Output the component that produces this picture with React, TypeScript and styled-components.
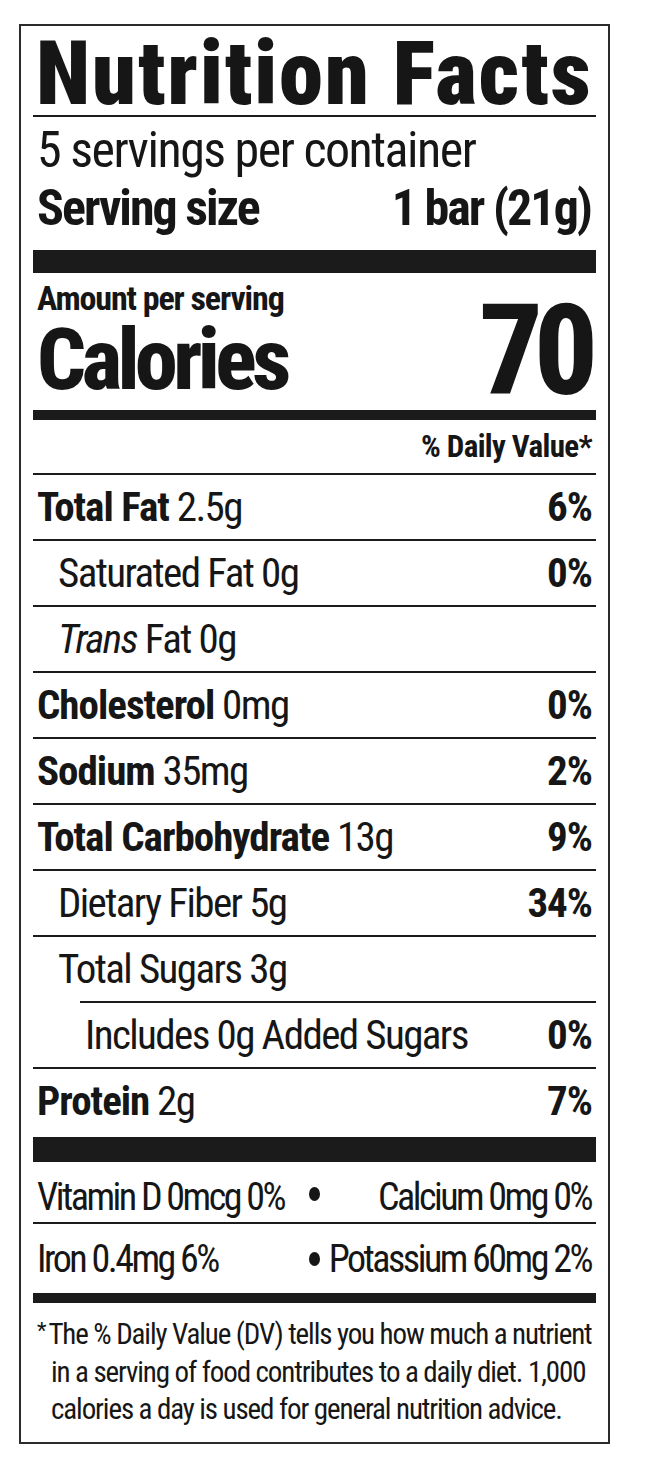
import React from "react";
import styled, { createGlobalStyle } from "styled-components";

const GlobalStyle = createGlobalStyle`
  body {
    margin: 0;
    background: #ffffff;
    font-family: Roboto, "Liberation Sans", Arial, sans-serif;
    font-stretch: 75%;
    color: #161616;
  }
`;

type Nutrient = {
  name: string;
  amount: string;
  dv?: string;
  bold?: boolean;
  italic?: boolean;
  indent?: number;
  ruleIndent?: number;
};

const nutrients: Nutrient[] = [
  { name: "Total Fat", amount: "2.5g", dv: "6%", bold: true },
  { name: "Saturated Fat", amount: "0g", dv: "0%", indent: 1 },
  { name: "Trans", amount: "Fat 0g", italic: true, indent: 1 },
  { name: "Cholesterol", amount: "0mg", dv: "0%", bold: true },
  { name: "Sodium", amount: "35mg", dv: "2%", bold: true },
  { name: "Total Carbohydrate", amount: "13g", dv: "9%", bold: true },
  { name: "Dietary Fiber", amount: "5g", dv: "34%", indent: 1 },
  { name: "Total Sugars", amount: "3g", indent: 1 },
  { name: "Includes 0g Added Sugars", amount: "", dv: "0%", indent: 2, ruleIndent: 47 },
  { name: "Protein", amount: "2g", dv: "7%", bold: true },
];

const vitamins = [
  ["Vitamin D 0mcg 0%", "Calcium 0mg 0%"],
  ["Iron 0.4mg 6%", "Potassium 60mg 2%"],
];

const Label = styled.div`
  box-sizing: border-box;
  width: 591px;
  margin: 24px 0 0 19px;
  padding: 0 12px 13px;
  border: 2px solid #2b2b2b;
`;

const Title = styled.h1`
  margin: 0;
  padding: 6px 0 0 3px;
  font-size: 89px;
  line-height: 83px;
  font-weight: 900;
  letter-spacing: 1.7px;
  white-space: nowrap;
`;

const Bar = styled.div<{ $h: number; $mt?: number }>`
  height: ${(p) => p.$h}px;
  margin-top: ${(p) => p.$mt ?? 0}px;
  background: #1b1b1b;
`;

const Servings = styled.div`
  padding: 8px 0 0 4px;
  font-size: 50px;
  line-height: 50px;
  letter-spacing: -1.5px;
`;

const ServingSize = styled.div`
  display: flex;
  justify-content: space-between;
  padding: 7px 5px 0 4px;
  margin-bottom: 16px;
  font-size: 50px;
  line-height: 52px;
  font-weight: 700;
  letter-spacing: -2px;
`;

const CaloriesBlock = styled.div`
  display: flex;
  justify-content: space-between;
  align-items: flex-end;
  padding: 8px 7px 5px 4px;
`;

const AmountPer = styled.div`
  font-size: 34px;
  line-height: 34px;
  font-weight: 700;
  letter-spacing: -1.1px;
`;

const CaloriesWord = styled.div`
  font-size: 86px;
  line-height: 90px;
  font-weight: 800;
  letter-spacing: -4.5px;
`;

const CaloriesValue = styled.div`
  font-size: 126px;
  line-height: 108px;
  font-weight: 800;
  letter-spacing: -9px;
`;

const DVHeader = styled.div`
  text-align: right;
  padding-right: 4px;
  font-size: 31px;
  line-height: 53px;
  font-weight: 700;
  letter-spacing: -0.6px;
`;

const Row = styled.div<{ $pad: number; $ruleIndent: number }>`
  display: flex;
  justify-content: space-between;
  height: 64px;
  margin-left: ${(p) => p.$ruleIndent}px;
  padding: 0 4px 0 ${(p) => p.$pad}px;
  border-top: 2px solid #1b1b1b;
  font-size: 41px;
  line-height: 64px;
  letter-spacing: -1.6px;
  white-space: nowrap;
`;

const Strong = styled.span`
  font-weight: 700;
  letter-spacing: -1px;
`;

const Italic = styled.span`
  font-style: italic;
`;

const Vitamins = styled.div`
  display: grid;
  grid-template-columns: minmax(0, 1fr) auto minmax(0, 1fr);
  font-size: 38px;
  letter-spacing: -2.5px;
  white-space: nowrap;
`;

const VitaminCell = styled.div<{ $right?: boolean; $first: boolean }>`
  display: flex;
  justify-content: ${(p) => (p.$right ? "flex-end" : "flex-start")};
  height: ${(p) => (p.$first ? 62 : 69)}px;
  box-sizing: border-box;
  padding: ${(p) => (p.$first ? "8px 5px 0 4px" : "2px 5px 0 4px")};
  line-height: ${(p) => (p.$first ? 54 : 67)}px;
  border-bottom: ${(p) => (p.$first ? "2px solid #1b1b1b" : "none")};
`;

const Bullet = styled.div<{ $first: boolean }>`
  display: flex;
  align-items: center;
  justify-content: center;
  width: 20px;
  height: ${(p) => (p.$first ? 62 : 69)}px;
  box-sizing: border-box;
  border-bottom: ${(p) => (p.$first ? "2px solid #1b1b1b" : "none")};

  &::before {
    content: "";
    width: 11px;
    height: 14px;
    border-radius: 50%;
    background: #161616;
    margin-top: ${(p) => (p.$first ? 4 : 0)}px;
  }
`;

const Footnote = styled.p`
  margin: 0;
  padding: 9px 0 0 18px;
  text-indent: -14px;
  font-size: 29px;
  line-height: 37.5px;
  letter-spacing: -1.1px;
  white-space: nowrap;
`;

const Star = styled.span`
  font-size: 22px;
  vertical-align: 6px;
  margin-right: 3px;
`;

const rowPad = (n: Nutrient) => {
  if (n.indent === 2) return 5;
  return n.indent === 1 ? 25 : 4;
};

export default function App() {
  return (
    <>
      <GlobalStyle />
      <Label>
        <Title>Nutrition Facts</Title>
        <Bar $h={2} />
        <Servings>5 servings per container</Servings>
        <ServingSize>
          <span>Serving size</span>
          <span>1 bar (21g)</span>
        </ServingSize>
        <Bar $h={23} />
        <CaloriesBlock>
          <div>
            <AmountPer>Amount per serving</AmountPer>
            <CaloriesWord>Calories</CaloriesWord>
          </div>
          <CaloriesValue>70</CaloriesValue>
        </CaloriesBlock>
        <Bar $h={10} />
        <DVHeader>% Daily Value*</DVHeader>
        {nutrients.map((n) => (
          <Row key={n.name} $pad={rowPad(n)} $ruleIndent={n.ruleIndent ?? 0}>
            <span>
              {n.bold ? <Strong>{n.name}</Strong> : n.italic ? <Italic>{n.name}</Italic> : n.name}
              {n.amount && ` ${n.amount}`}
            </span>
            {n.dv && <Strong>{n.dv}</Strong>}
          </Row>
        ))}
        <Bar $h={25} $mt={4} />
        <Vitamins>
          {vitamins.map(([left, right], i) => (
            <React.Fragment key={left}>
              <VitaminCell $first={i === 0}>{left}</VitaminCell>
              <Bullet $first={i === 0} />
              <VitaminCell $first={i === 0} $right>
                {right}
              </VitaminCell>
            </React.Fragment>
          ))}
        </Vitamins>
        <Bar $h={10} />
        <Footnote>
          <Star>*</Star>The % Daily Value (DV) tells you how much a nutrient
          <br />
          in a serving of food contributes to a daily diet. 1,000
          <br />
          calories a day is used for general nutrition advice.
        </Footnote>
      </Label>
    </>
  );
}
